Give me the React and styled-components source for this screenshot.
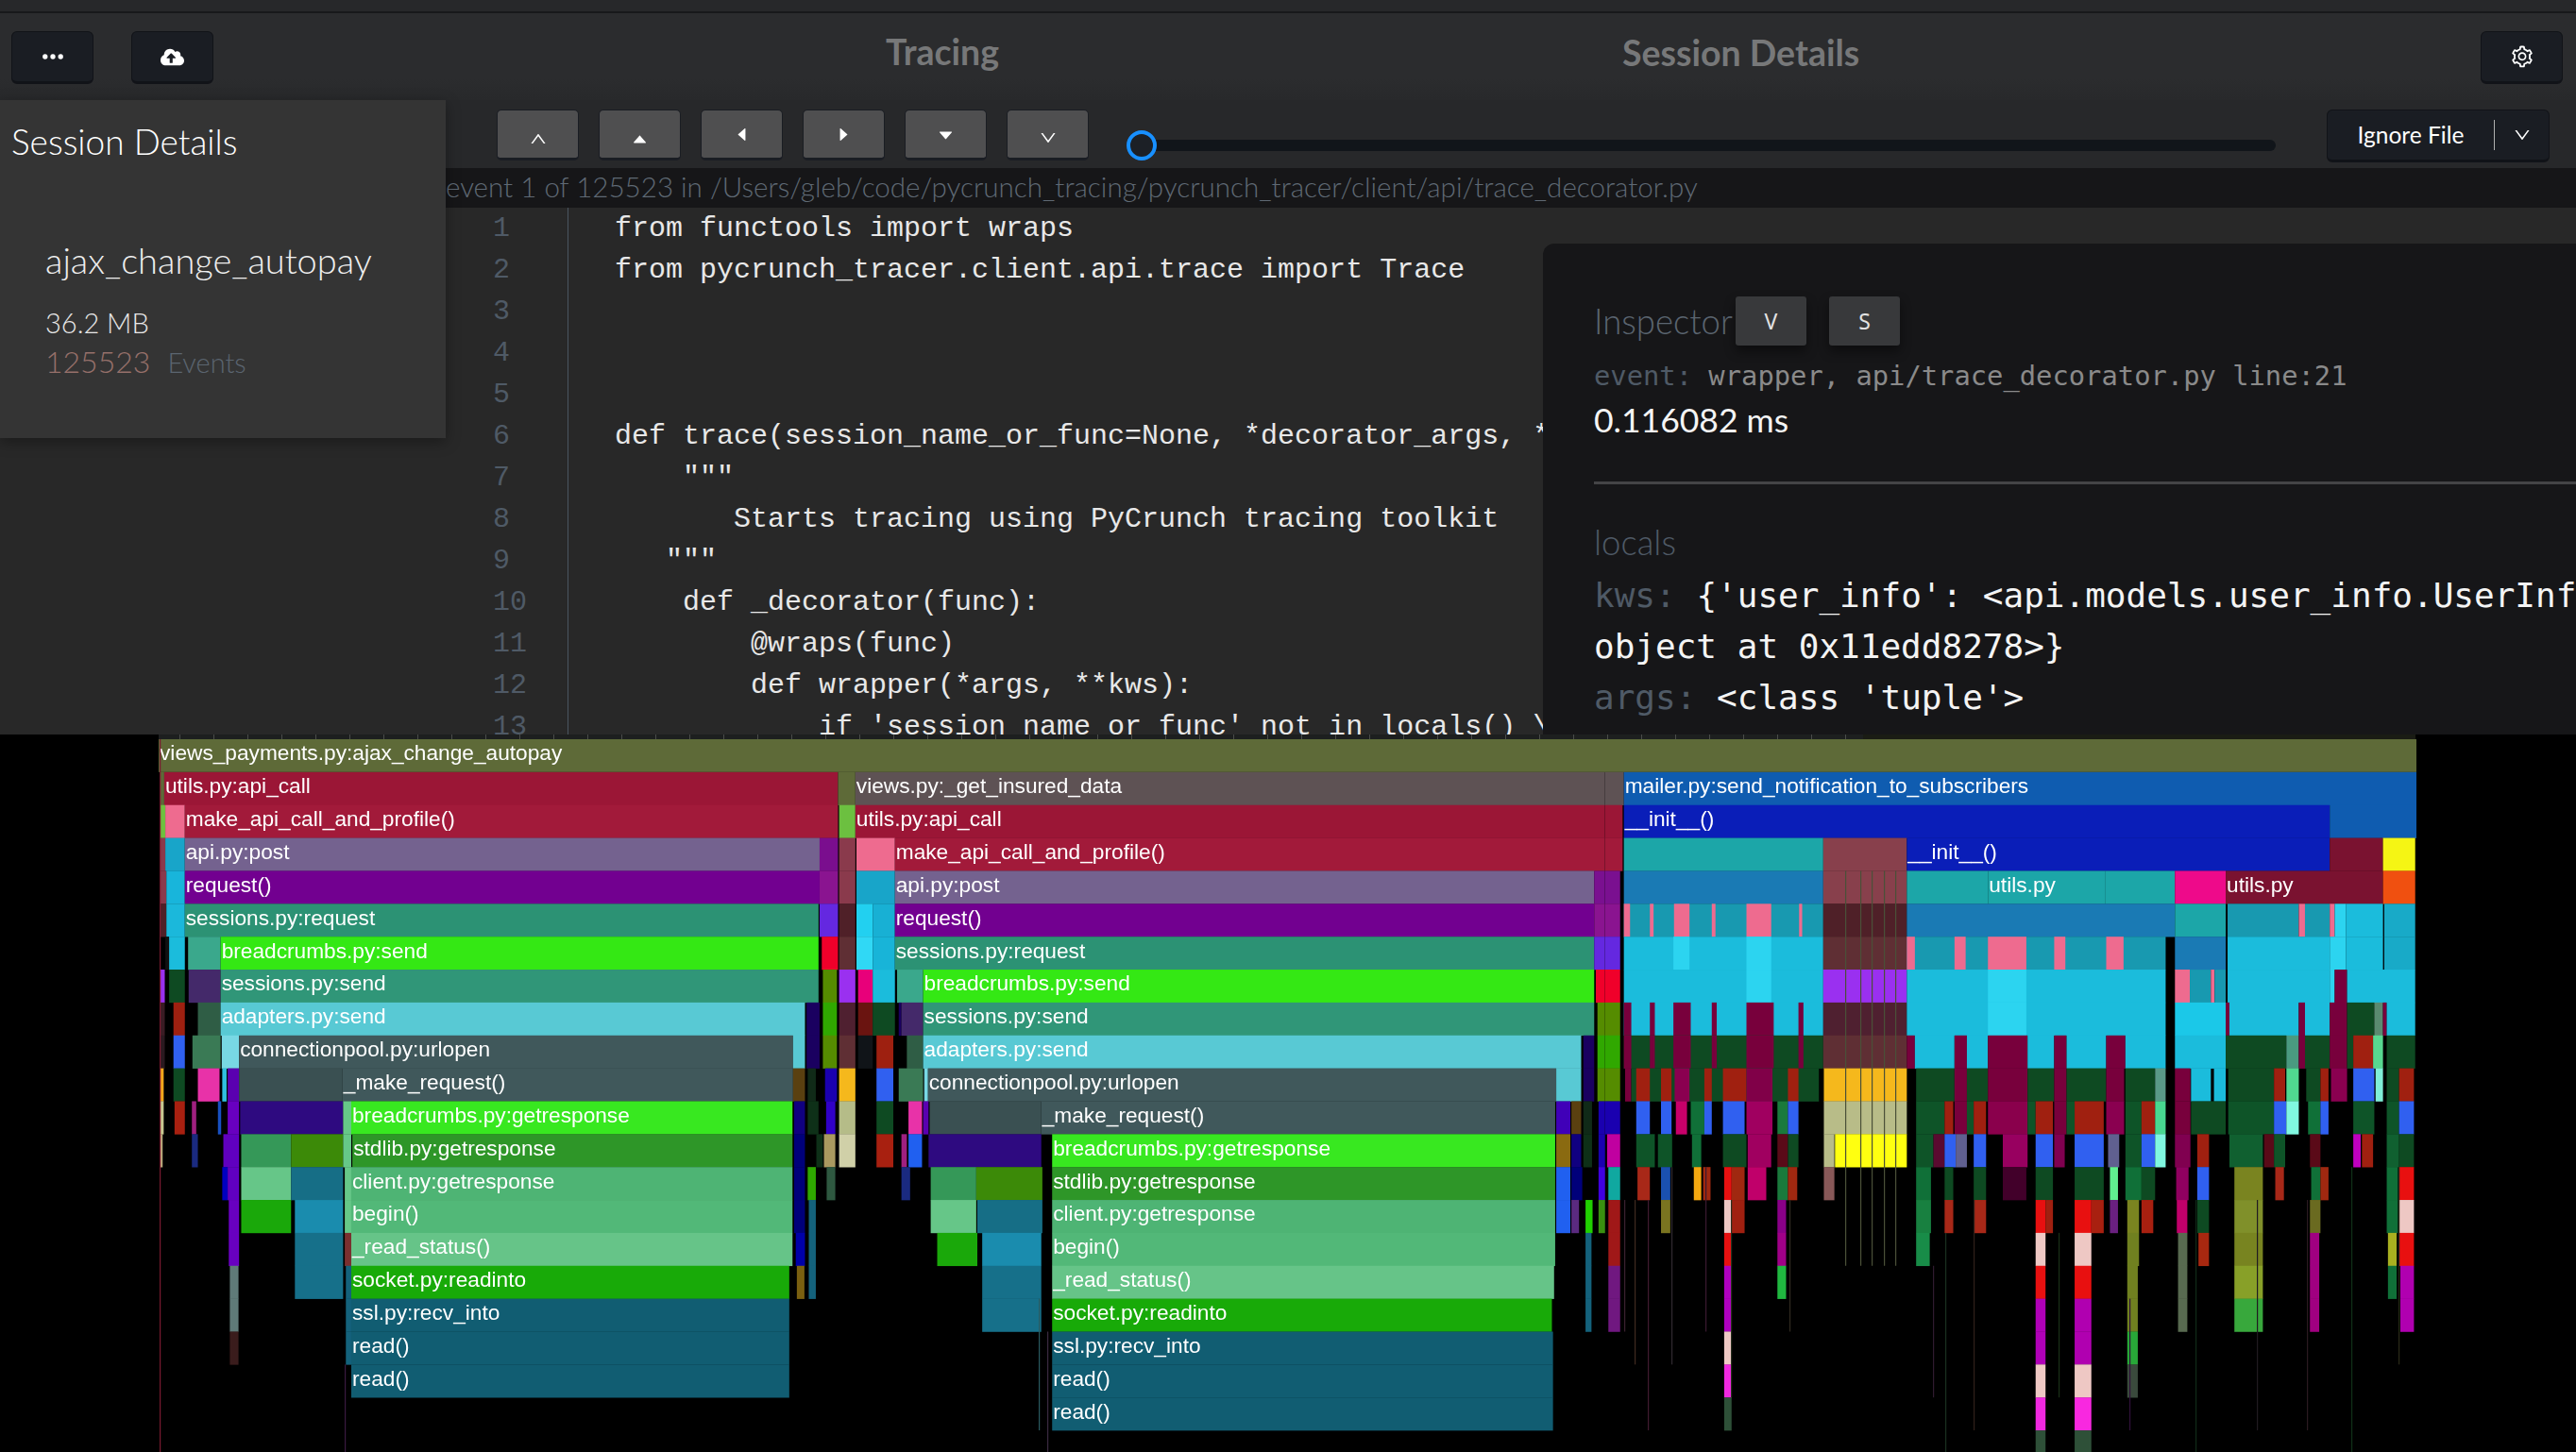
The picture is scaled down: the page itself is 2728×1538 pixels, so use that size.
import React from "react";
import styled, { createGlobalStyle } from "styled-components";
import {
  AiOutlineEllipsis,
  AiOutlineSetting,
  AiOutlineUp,
  AiOutlineDown,
  AiFillCaretUp,
  AiFillCaretDown,
  AiFillCaretLeft,
  AiFillCaretRight,
} from "react-icons/ai";
import { FaCloudUploadAlt } from "react-icons/fa";

const GlobalStyle = createGlobalStyle`
  html, body {
    margin: 0;
    padding: 0;
    background: #000;
  }
`;

const Page = styled.div`
  width: 2728px;
  height: 1538px;
  overflow: hidden;
  display: flex;
  flex-direction: column;
  font-family: "Lato", "Liberation Sans", sans-serif;
  background: #000;
`;

const Workspace = styled.div`
  position: relative;
  height: 778px;
  flex: none;
  overflow: hidden;
  display: flex;
  flex-direction: column;
  background: #282828;
`;

const TopStrip = styled.div`
  height: 12px;
  flex: none;
  background: #27282a;
  border-bottom: 2px solid #18191b;
`;

const Header = styled.header`
  height: 92px;
  flex: none;
  display: grid;
  grid-template-columns: 938px 780px 1fr;
  align-items: center;
  padding-right: 14px;
  background: linear-gradient(#2b2c2e 75%, #28292b);
`;

const HeaderLeft = styled.div`
  display: flex;
  gap: 40px;
  padding-left: 12px;
  margin-top: 2px;
`;

const HeaderTitle = styled.div`
  font-size: 37.5px;
  font-weight: 700;
  color: #777879;
  margin-top: -12px;
`;

const HeaderRight = styled.div`
  display: flex;
  justify-content: space-between;
  align-items: center;
  margin-top: 2px;
`;

const DarkButton = styled.button`
  width: 87px;
  height: 56px;
  display: flex;
  align-items: center;
  justify-content: center;
  padding: 0;
  color: #fff;
  background: #1a1d23;
  border: 1px solid #111318;
  border-bottom-width: 3px;
  border-radius: 6px;
`;

const Toolbar = styled.div`
  height: 72px;
  flex: none;
  display: flex;
  align-items: flex-start;
  padding: 10px 28px 0 526px;
  background: #27282a;
  box-sizing: border-box;
`;

const NavButtons = styled.div`
  display: flex;
  gap: 21px;
`;

const NavButton = styled.button`
  width: 87px;
  height: 54px;
  display: flex;
  align-items: center;
  justify-content: center;
  padding: ${(props) => props.$drop * 2}px 0 0;
  color: #fff;
  background: #4f4f50;
  border: 1px solid #1a1d23;
  border-bottom-width: 3px;
  border-radius: 5px;
`;

const Slider = styled.div`
  position: relative;
  width: 1217px;
  height: 12px;
  margin: 32px 54px 0 40px;
  border-radius: 6px;
  background: #11151a;
`;

const SliderKnob = styled.span`
  position: absolute;
  left: 0;
  top: -10px;
  width: 32px;
  height: 32px;
  box-sizing: border-box;
  border: 4px solid #1890ff;
  border-radius: 50%;
  background: #1c2026;
`;

const IgnoreButton = styled.button`
  width: 236px;
  height: 56px;
  display: flex;
  align-items: center;
  padding: 0;
  color: #fff;
  font-family: inherit;
  font-size: 24.5px;
  background: #1a1d23;
  border: 1px solid #111318;
  border-bottom-width: 3px;
  border-radius: 6px;
`;

const IgnoreLabel = styled.span`
  width: 176px;
  line-height: 32px;
  text-align: center;
  border-right: 1px solid #b0b0b0;
`;

const IgnoreCaret = styled.span`
  flex: 1;
  display: flex;
  justify-content: center;
`;

const PathBar = styled.div`
  height: 42px;
  flex: none;
  margin-left: 472px;
  line-height: 40px;
  font-size: 29.55px;
  font-weight: 300;
  color: #5f6974;
  background: #161618;
  white-space: nowrap;
`;

const CodeArea = styled.div`
  flex: 1;
  margin-left: 472px;
  display: flex;
  min-height: 0;
`;

const Gutter = styled.div`
  width: 79px;
  padding-left: 50px;
  flex: none;
  border-right: 1px solid #4a5560;
`;

const LineNumber = styled.div`
  height: 44px;
  line-height: 44px;
  font-family: "Liberation Mono", monospace;
  font-size: 30px;
  color: #4f5a66;
`;

const CodeBody = styled.div`
  padding-left: 49px;
`;

const CodeLine = styled.pre`
  height: 44px;
  margin: 0;
  line-height: 44px;
  font-family: "Liberation Mono", monospace;
  font-size: 30px;
  color: #e8e8e8;
`;

const SessionPanel = styled.aside`
  position: absolute;
  left: 0;
  top: 106px;
  width: 472px;
  height: 358px;
  box-sizing: border-box;
  padding: 0 12px;
  background: #343434;
  box-shadow: 0 4px 14px rgba(0, 0, 0, 0.35);
  color: #fff;
`;

const PanelTitle = styled.h2`
  margin: 0;
  padding-top: 22px;
  font-size: 37px;
  line-height: 44px;
  font-weight: 300;
`;

const PanelBody = styled.div`
  padding: 80px 0 0 36px;
`;

const SessionName = styled.div`
  font-size: 38px;
  line-height: 46px;
  font-weight: 300;
  color: #eee;
`;

const SessionSize = styled.div`
  margin-top: 26px;
  font-size: 29px;
  line-height: 36px;
  font-weight: 300;
  color: #e8e8e8;
`;

const SessionEvents = styled.div`
  display: flex;
  align-items: baseline;
  gap: 18px;
  margin-top: 3px;
`;

const EventCount = styled.span`
  font-size: 32px;
  font-weight: 300;
  color: #96706a;
`;

const EventsLabel = styled.span`
  font-size: 29px;
  font-weight: 300;
  color: #5b6570;
`;

const Inspector = styled.section`
  position: absolute;
  left: 1634px;
  right: 0;
  top: 258px;
  bottom: 0;
  overflow: hidden;
  box-sizing: border-box;
  padding: 56px 0 0 54px;
  background: #161618;
  border-top-left-radius: 12px;
`;

const InspectorHead = styled.div`
  display: flex;
  align-items: center;
  height: 52px;
`;

const InspectorTitle = styled.span`
  width: 150px;
  font-size: 36.5px;
  font-weight: 300;
  color: #5b6570;
`;

const KeyButton = styled.button`
  width: 75px;
  height: 52px;
  margin-right: 24px;
  padding: 0;
  color: #e2e2e2;
  font-family: "Noto Sans", sans-serif;
  font-size: 23px;
  background: #38393b;
  border: none;
  border-radius: 3px;
  box-shadow: 0 6px 12px rgba(0, 0, 0, 0.45);
`;

const EventLine = styled.div`
  margin-top: 10px;
  line-height: 44px;
  font-family: "DejaVu Sans Mono", monospace;
  font-size: 28.8px;
  color: #8a8a8a;
  white-space: pre;
`;

const Muted = styled.span`
  color: #4f5a66;
`;

const Duration = styled.div`
  margin-top: 0;
  line-height: 50px;
  font-size: 35.5px;
  font-weight: 400;
  color: #f4f4f4;
`;

const Divider = styled.hr`
  height: 3px;
  margin: 40px 0 0;
  border: none;
  background: #444446;
`;

const LocalsTitle = styled.div`
  margin: 39px 0 8px;
  line-height: 44px;
  font-size: 36.5px;
  font-weight: 300;
  color: #4f5a66;
`;

const LocalLine = styled.div`
  line-height: 54px;
  font-family: "DejaVu Sans Mono", monospace;
  font-size: 36px;
  color: #f4f4f4;
  white-space: pre;
`;

const FlameChart = styled.svg`
  display: block;
  flex: none;
  filter: blur(0.6px);
`;

const FlameLabel = styled.text`
  font-family: "Liberation Sans", Arial, sans-serif;
  font-size: 22.7px;
  fill: #ffffff;
`;

const codeLines = [
  "from functools import wraps",
  "from pycrunch_tracer.client.api.trace import Trace",
  "",
  "",
  "",
  "def trace(session_name_or_func=None, *decorator_args, **decorator_kwargs):",
  '    """',
  "       Starts tracing using PyCrunch tracing toolkit",
  '   """',
  "    def _decorator(func):",
  "        @wraps(func)",
  "        def wrapper(*args, **kws):",
  "            if 'session_name_or_func' not in locals() \\",
];

const olive = "#5e6a38";
const crimson = "#9b1636";
const crimson2 = "#a21a3a";
const pink = "#ee6b8f";
const cyan = "#1bbcdc";
const cyan2 = "#2cd4f0";
const cyan3 = "#18a5c9";
const teal = "#1899b0";
const maroon = "#78003c";
const forest = "#0e4a22";
const forest2 = "#0e5428";
const forest3 = "#107038";
const rust = "#a02010";
const blue = "#3060f0";
const purple = "#720090";
const mauve = "#74628f";
const sea = "#2c9274";
const lime = "#34e814";
const aqua = "#58c9d4";
const slate = "#40585b";
const slate2 = "#3a5052";
const deep = "#115d72";
const rosy = "#8a3a4c";
const wine = "#4f2028";
const wine2 = "#5f2f34";
const violet = "#9a30f0";
const amber = "#f5b81c";
const indigo = "#1a00b0";
const navy = "#00007a";
const mist = "#eec8c4";
const magenta = "#b000b0";
const red = "#e81010";

// segments are [from, to, colour, label] in crop pixels of each chart part
const leftRows = {
  1: [[295, 303, olive], [303, 1533, crimson, "utils.py:api_call"]],
  2: [[295, 305, "#6fbf3f"], [305, 341, pink], [341, 1533, crimson2, "make_api_call_and_profile()"]],
  3: [[295, 305, rosy], [305, 341, cyan3], [341, 1512, mauve, "api.py:post"], [1512, 1533, "#7a0e8e"]],
  4: [[295, 307, rosy], [307, 341, "#18b5db"], [341, 1512, purple, "request()"], [1512, 1533, "#8a1490"]],
  5: [[295, 307, wine], [307, 341, "#1bb8db"], [341, 1510, sea, "sessions.py:request"], [1512, 1533, "#6428e0"]],
  6: [[305, 312, "#111"], [312, 341, cyan], [347, 407, "#3aa88c"], [407, 1510, lime, "breadcrumbs.py:send"], [1516, 1533, "#f0002a"]],
  7: [[296, 304, violet], [312, 341, forest], [348, 407, "#44296a"], [407, 1510, "#309678", "sessions.py:send"], [1518, 1533, "#558c00"]],
  8: [[296, 304, "#3a1c24"], [320, 341, "#9e2010"], [365, 407, "#2f5d45"], [407, 1485, aqua, "adapters.py:send"], [1488, 1512, "#1a0060"], [1518, 1533, "#30a800"]],
  9: [[296, 304, "#2a1a20"], [320, 341, blue], [355, 407, "#3a7a55"], [409, 441, "#78d8e4"], [441, 1463, slate, "connectionpool.py:urlopen"], [1463, 1485, aqua], [1488, 1512, "#1a0060"], [1518, 1533, "#558c00"]],
  10: [[296, 302, "#f5a81c"], [320, 341, forest], [365, 405, "#e832a8"], [410, 418, "#30c0e0"], [420, 441, "#5a00b0"], [441, 632, slate2], [632, 1463, slate, "_make_request()"], [1463, 1485, "#5a4010"], [1490, 1505, "#102a18"], [1522, 1533, indigo]],
  11: [[296, 302, "#c8c890"], [322, 341, "#a82010"], [354, 362, "#a02080"], [402, 408, "#1850c0"], [420, 441, "#6800c0"], [443, 633, "#2e0a80"], [633, 648, "#66c888"], [648, 1462, "#38e820", "breadcrumbs.py:getresponse"], [1465, 1485, "#100080"], [1490, 1510, "#0e3018"], [1524, 1533, "#3000c8"]],
  12: [[296, 300, "#c0b080"], [354, 365, "#1a2a80"], [412, 441, "#6000c0"], [445, 537, "#359858"], [537, 633, "#3c8a08"], [633, 648, "#66c888"], [650, 1462, "#2e9628", "stdlib.py:getresponse"], [1465, 1485, navy], [1506, 1518, "#0e3018"], [1520, 1533, "#aa9a60"]],
  13: [[410, 420, "#0000c0"], [420, 441, "#6000c0"], [445, 537, "#66c688"], [537, 633, "#166e86"], [636, 648, "#66c888"], [648, 1462, "#4eb474", "client.py:getresponse"], [1465, 1485, navy], [1490, 1505, "#2fa800"], [1525, 1533, "#2e5840"]],
  14: [[422, 441, "#6800c0"], [445, 537, "#1aa80a"], [544, 633, "#1a8cae"], [636, 648, "#66c888"], [648, 1462, "#52b878", "begin()"], [1465, 1485, navy], [1492, 1505, "#14627c"]],
  15: [[422, 441, "#6800c0"], [544, 633, "#16708a"], [636, 648, "#7a3030"], [648, 1462, "#66c488", "_read_status()"], [1468, 1485, "#0000a8"], [1492, 1505, "#14627c"]],
  16: [[424, 440, "#5f7a78"], [544, 633, "#16708a"], [638, 648, "#14627c"], [648, 1456, "#18aa08", "socket.py:readinto"], [1470, 1484, "#7a6010"], [1492, 1505, "#14627c"]],
  17: [[424, 440, "#5f7a78"], [638, 648, "#14627c"], [648, 1456, deep, "ssl.py:recv_into"]],
  18: [[424, 440, "#3a1c1c"], [638, 648, "#14627c"], [648, 1456, deep, "read()"]],
  19: [[648, 1456, deep, "read()"]],
};

const middleRows = {
  1: [[0, 13, crimson], [13, 45, olive], [45, 1428, "#5e5254", "views.py:_get_insured_data"]],
  2: [[0, 13, crimson2], [15, 45, "#6cc040"], [45, 1428, crimson, "utils.py:api_call"]],
  3: [[0, 13, "#7a0e8e"], [15, 45, rosy], [47, 118, pink], [118, 1428, crimson2, "make_api_call_and_profile()"]],
  4: [[0, 13, "#8a1490"], [15, 45, rosy], [47, 118, cyan3], [118, 1408, mauve, "api.py:post"], [1408, 1428, "#7a1090"]],
  5: [[0, 13, "#6428e0"], [15, 45, wine], [47, 77, "#22d0f0"], [77, 118, "#18b0d4"], [118, 1408, purple, "request()"], [1408, 1428, "#8a1490"]],
  6: [[0, 13, "#f0002a"], [15, 45, wine2], [47, 77, "#30d8f5"], [77, 118, "#18b4d8"], [118, 1408, sea, "sessions.py:request"], [1408, 1428, "#6428e0"]],
  7: [[0, 11, "#558c00"], [15, 45, violet], [50, 77, "#e8007a"], [77, 118, cyan], [122, 170, "#3aa88c"], [170, 1408, lime, "breadcrumbs.py:send"], [1411, 1428, "#f0002a"]],
  8: [[0, 11, "#30a800"], [15, 45, "#4f2030"], [50, 77, "#6a1410"], [77, 118, forest], [125, 130, "#1a0060"], [130, 170, "#44296a"], [170, 1408, "#309678", "sessions.py:send"], [1414, 1428, "#558c00"]],
  9: [[0, 11, "#558c00"], [15, 45, wine2], [50, 77, "#101418"], [84, 115, "#9e2010"], [140, 170, "#2f5d45"], [170, 1384, aqua, "adapters.py:send"], [1388, 1408, "#1a0060"], [1414, 1428, "#30a800"]],
  10: [[0, 11, indigo], [15, 45, amber], [84, 115, blue], [125, 170, "#3a7a55"], [172, 179, "#78d8e4"], [179, 1338, slate, "connectionpool.py:urlopen"], [1338, 1384, aqua], [1388, 1408, "#1a0060"], [1414, 1428, "#558c00"]],
  11: [[0, 8, "#3000c8"], [15, 45, "#b5bc88"], [84, 115, forest], [143, 168, "#e832a8"], [170, 180, "#5a00b0"], [182, 388, slate2], [388, 1336, slate, "_make_request()"], [1338, 1364, "#4000b8"], [1366, 1384, "#5a4010"], [1388, 1404, "#102a18"], [1416, 1428, indigo]],
  12: [[0, 8, "#aa9a60"], [15, 45, "#d0d0a8"], [84, 115, "#a82010"], [130, 140, "#a02080"], [143, 168, "#2060f0"], [180, 388, "#2e0a80"], [408, 1336, "#38e820", "breadcrumbs.py:getresponse"], [1338, 1364, "#8a6a10"], [1366, 1384, "#100080"], [1388, 1404, "#0e3018"], [1416, 1428, indigo]],
  13: [[0, 8, "#2e5840"], [130, 146, "#1a2a80"], [184, 268, "#359858"], [268, 390, "#3c8a08"], [408, 1336, "#2e9628", "stdlib.py:getresponse"], [1338, 1364, "#2060f0"], [1366, 1386, navy], [1416, 1428, "#4000e0"]],
  14: [[184, 268, "#66c688"], [270, 390, "#166e86"], [408, 1336, "#4eb474", "client.py:getresponse"], [1338, 1364, "#2060f0"], [1366, 1380, "#5a2a80"], [1392, 1405, "#20d000"], [1416, 1428, "#3a9010"]],
  15: [[196, 270, "#1aa80a"], [279, 388, "#1a8cae"], [408, 1336, "#52b878", "begin()"], [1392, 1403, "#14627c"]],
  16: [[279, 388, "#16708a"], [408, 1334, "#66c488", "_read_status()"], [1392, 1403, "#14627c"]],
  17: [[279, 388, "#16708a"], [408, 1330, "#18aa08", "socket.py:readinto"], [1392, 1403, "#14627c"]],
  18: [[408, 1332, deep, "ssl.py:recv_into"]],
  19: [[408, 1332, deep, "read()"]],
  20: [[408, 1332, deep, "read()"]],
};

const rightRows = {
  1: [[0, 30, "#5e5254"], [30, 1310, "#0f5cb0", "mailer.py:send_notification_to_subscribers"]],
  2: [[0, 28, crimson], [30, 1170, "#0a1eb8", "__init__()"], [1170, 1310, "#0f5cb0"]],
  3: [[0, 28, crimson2], [30, 352, "#1ca6a8"], [352, 487, "#88404c"], [487, 1170, "#0a1eb8", "__init__()"], [1170, 1256, "#7a1230"], [1256, 1308, "#f5f514"]],
  4: [[0, 24, "#7a1090"], [30, 352, "#1a7ab4"], [352, 487, "#88404c"], [487, 618, "#1ca6a8"], [618, 808, "#1ca6a8", "utils.py"], [808, 920, "#1ca6a8"], [920, 1002, "#ee0a8a"], [1002, 1256, "#7a1230", "utils.py"], [1256, 1308, "#f05010"]],
  5: [[0, 24, "#8a1490"], [30, 352, teal], [30, 40, pink], [72, 78, pink], [111, 136, pink], [172, 178, pink], [228, 268, pink], [313, 318, pink], [352, 487, wine], [487, 920, "#1a7ab4"], [920, 1002, "#1ca6a8"], [1005, 1120, teal], [1120, 1130, pink], [1130, 1170, teal], [1170, 1178, pink], [1178, 1196, cyan2], [1196, 1256, cyan], [1258, 1308, "#18aac8"]],
  6: [[0, 24, "#6428e0"], [30, 352, cyan], [110, 136, cyan2], [228, 268, cyan2], [352, 487, wine2], [487, 905, teal], [487, 500, pink], [564, 582, pink], [618, 680, pink], [725, 743, pink], [809, 837, pink], [920, 1002, "#1a7ab4"], [1005, 1170, cyan], [1170, 1196, cyan2], [1196, 1256, cyan], [1258, 1308, "#18aac8"]],
  7: [[0, 24, "#f0002a"], [30, 352, cyan], [228, 268, cyan2], [352, 487, violet], [487, 905, cyan], [618, 680, cyan2], [920, 944, pink], [944, 978, teal], [978, 984, pink], [984, 1002, teal], [1005, 1170, cyan], [1170, 1178, cyan2], [1178, 1198, maroon], [1198, 1308, cyan]],
  8: [[0, 24, "#558c00"], [30, 352, cyan], [30, 42, maroon], [72, 80, maroon], [110, 138, maroon], [172, 180, maroon], [228, 272, maroon], [312, 320, maroon], [352, 487, "#4f2030"], [487, 905, cyan], [618, 680, cyan2], [920, 1002, "#1bc8e8"], [1002, 1008, maroon], [1008, 1120, cyan], [1120, 1130, maroon], [1130, 1170, cyan], [1170, 1198, maroon], [1198, 1242, forest], [1242, 1256, "#5a8a70"], [1256, 1262, maroon], [1262, 1308, cyan]],
  9: [[0, 24, "#30a800"], [30, 352, forest], [30, 42, maroon], [72, 80, maroon], [110, 138, maroon], [172, 180, maroon], [228, 272, maroon], [312, 320, maroon], [352, 487, wine2], [487, 500, maroon], [500, 564, cyan], [564, 584, maroon], [584, 618, cyan], [618, 682, maroon], [682, 725, cyan], [725, 745, maroon], [745, 809, cyan], [809, 840, maroon], [840, 905, cyan], [920, 1002, cyan], [1002, 1100, forest], [1100, 1120, "#4a9a80"], [1120, 1130, maroon], [1130, 1170, forest], [1170, 1198, maroon], [1198, 1208, forest], [1208, 1240, rust], [1240, 1256, "#58d890"], [1262, 1308, forest]],
  10: [[0, 24, "#558c00"], [32, 42, maroon], [42, 345, forest], [50, 72, rust], [90, 107, rust], [112, 136, "#8a0050"], [160, 172, rust], [190, 228, rust], [228, 270, "#800048"], [295, 312, rust], [353, 487, amber], [502, 564, forest], [564, 584, maroon], [584, 618, forest], [618, 682, maroon], [682, 725, forest], [725, 745, maroon], [745, 809, forest], [809, 838, maroon], [840, 888, forest], [888, 905, "#5a9a88"], [920, 945, maroon], [946, 978, cyan], [983, 1002, cyan], [1006, 1080, forest], [1080, 1098, rust], [1100, 1120, "#50d890"], [1132, 1155, forest], [1155, 1168, rust], [1172, 1198, "#8a0050"], [1208, 1242, blue], [1244, 1256, "#80f0d8"], [1262, 1282, forest], [1282, 1306, rust]],
  11: [[0, 24, indigo], [50, 72, blue], [90, 107, blue], [114, 132, "#c8006a"], [138, 160, forest3], [160, 172, blue], [190, 225, blue], [228, 270, "#a00060"], [278, 295, "#1a7a3c"], [295, 312, blue], [353, 487, "#b8bc88"], [502, 548, forest2], [548, 562, rust], [564, 584, maroon], [584, 595, forest2], [595, 615, rust], [618, 682, "#8a004c"], [682, 695, forest2], [695, 723, rust], [725, 745, maroon], [745, 758, forest2], [758, 805, rust], [809, 838, "#8a0050"], [840, 866, forest2], [866, 888, rust], [888, 905, "#48d890"], [920, 945, maroon], [946, 1002, forest], [1006, 1080, forest2], [1080, 1100, blue], [1100, 1120, "#80f8e0"], [1135, 1155, forest3], [1155, 1168, blue], [1208, 1242, forest2], [1262, 1282, forest2], [1282, 1306, blue]],
  12: [[3, 24, "#c000a0"], [50, 80, forest2], [85, 108, forest2], [140, 155, forest3], [190, 228, forest], [230, 268, "#a00060"], [278, 295, "#5a0a18"], [295, 312, forest], [353, 370, "#b8bc88"], [371, 487, "#ffff10"], [502, 530, forest2], [530, 548, "#5a0a30"], [548, 566, blue], [566, 584, "#606090"], [595, 615, blue], [642, 682, "#980060"], [695, 723, blue], [725, 742, "#800050"], [758, 805, blue], [812, 830, "#606090"], [840, 866, forest2], [866, 888, blue], [888, 905, "#80f8e0"], [920, 945, "#800050"], [956, 975, rust], [1008, 1062, "#106030"], [1064, 1080, "#5a0a18"], [1080, 1098, forest2], [1138, 1155, "#5a0a18"], [1208, 1220, "#c000c0"], [1222, 1240, rust], [1262, 1282, "#106030"], [1282, 1306, forest]],
  13: [[5, 24, "#10a8a0"], [52, 72, "#a82818"], [90, 105, "#1a50b0"], [143, 155, "#f5a810"], [158, 170, "#a02810"], [192, 204, red], [204, 225, "#a02810"], [230, 260, "#c0006a"], [278, 295, "#1a7a3c"], [295, 310, "#a02810"], [353, 370, "#885858"], [502, 526, forest3], [548, 562, forest], [595, 615, forest], [642, 680, "#42002a"], [695, 723, forest], [758, 805, forest], [815, 828, "#60f090"], [840, 866, forest3], [866, 888, forest], [922, 942, "#900060"], [956, 975, blue], [1016, 1062, "#7a8420"], [1082, 1096, "#a82818"], [1140, 1155, forest3], [1155, 1168, "#a02810"], [1262, 1280, forest3], [1282, 1306, red]],
  14: [[5, 24, "#a01818"], [90, 105, "#7a7420"], [192, 204, mist], [204, 225, rust], [278, 292, "#8a0088"], [502, 526, "#188040"], [548, 562, "#a82818"], [595, 615, "#a82818"], [695, 711, red], [711, 723, rust], [758, 785, red], [785, 805, "#a82010"], [815, 828, "#6a2080"], [843, 862, "#7a8420"], [866, 885, "#a82010"], [923, 940, "#c0006a"], [956, 975, forest], [1016, 1062, "#80902a"], [1138, 1155, "#6a6a20"], [1262, 1280, forest3], [1282, 1306, mist]],
  15: [[5, 24, "#a01818"], [192, 204, red], [278, 292, "#a00088"], [502, 524, "#188c48"], [695, 711, mist], [758, 785, mist], [843, 862, "#708020"], [925, 940, "#586a50"], [958, 975, "#a82810"], [1016, 1062, "#788420"], [1138, 1153, "#a00080"], [1264, 1278, "#a8b020"], [1282, 1306, red]],
  16: [[5, 24, "#701880"], [192, 204, "#b000c0"], [278, 292, "#20b840"], [695, 711, red], [758, 785, red], [843, 860, "#708020"], [925, 940, "#586a50"], [1016, 1062, "#88a028"], [1138, 1153, "#a00080"], [1264, 1278, forest3], [1284, 1306, magenta]],
  17: [[5, 24, "#701880"], [192, 204, "#b000c0"], [695, 711, "#b000b8"], [758, 785, magenta], [843, 860, "#708020"], [925, 940, "#586a50"], [1016, 1062, "#38a83c"], [1138, 1153, "#a00080"], [1284, 1306, magenta]],
  18: [[192, 204, mist], [695, 711, "#b000b8"], [758, 785, magenta], [843, 860, "#28a838"]],
  19: [[192, 204, "#f028e0"], [695, 711, mist], [758, 785, mist], [843, 860, "#3a4a3c"]],
  20: [[192, 204, "#2e5038"], [695, 711, "#f028e0"], [758, 785, "#f828e0"]],
  21: [[695, 711, "#2e5038"], [758, 785, "#2e5038"]],
};

// hairlines: [x in full pixels, first row, last row, colour]
const hairlines = [
  [169, 0, 21, "#7a1a30"],
  [365, 19, 21, "#3a1a40"],
  [1109, 18, 21, "#3a2a40"],
  [1100, 17, 20, "#2a5a60"],
  [1954, 4, 15, "#4a5038"],
  [1970, 4, 15, "#4a5038"],
  [1982, 4, 15, "#4a5038"],
  [1995, 4, 15, "#4a5038"],
  [2007, 4, 15, "#4a5038"],
  [1720, 14, 17, "#3a2030"],
  [1731, 14, 18, "#402a20"],
  [1745, 14, 20, "#401a30"],
  [1770, 13, 18, "#302a30"],
  [1806, 13, 17, "#3a1a30"],
  [1833, 14, 19, "#2a3020"],
  [1895, 14, 17, "#302a20"],
  [2047, 16, 19, "#301a30"],
  [2060, 15, 21, "#1a3020"],
  [2090, 14, 20, "#30201a"],
  [2180, 15, 19, "#1a3018"],
  [2255, 17, 20, "#30103a"],
  [2325, 14, 21, "#102a18"],
  [2390, 14, 20, "#201a20"],
  [2443, 14, 20, "#2a1a20"],
  [2490, 13, 21, "#103018"],
  [2540, 13, 18, "#2a2a18"],
];

const ROW_HEIGHT = 34.86;
const CHART_HEIGHT = 760;
const LABEL_LIFT = 3;
const rowTop = (row) => 5 + ROW_HEIGHT * row;

const toBars = (rows, origin, scale) =>
  Object.entries(rows).flatMap(([row, segments]) =>
    segments.map(([from, to, color, label]) => ({
      row: Number(row),
      x: origin + from / scale,
      width: (to - from) / scale,
      color,
      label,
    }))
  );

const bars = [
  ...toBars(leftRows, 0, 1.742),
  ...toBars(middleRows, 880, 1.742),
  ...toBars(rightRows, 1700, 1.525),
];

const Flame = () => {
  return (
    <FlameChart width="2728" height={CHART_HEIGHT} viewBox={`0 0 2728 ${CHART_HEIGHT}`}>
      <defs>
        <pattern id="ticks" width="36" height="5" patternUnits="userSpaceOnUse">
          <rect width="36" height="5" fill="#1d1f1f" />
          <rect x="10" width="1" height="5" fill="#4a4c4a" />
        </pattern>
      </defs>
      <rect x="168" width="1805" height="5" fill="url(#ticks)" />
      <rect x="1973" width="585" height="5" fill="#1a1c14" />
      <rect x="168" y="5" width="2391" height={ROW_HEIGHT} fill={olive} />
      <FlameLabel x="169" y={5 + ROW_HEIGHT / 2 - LABEL_LIFT} dominantBaseline="central">
        views_payments.py:ajax_change_autopay
      </FlameLabel>
      {bars.map((bar, i) => (
        <rect
          key={i}
          x={bar.x}
          y={rowTop(bar.row)}
          width={bar.width}
          height={ROW_HEIGHT + 0.3}
          fill={bar.color}
        />
      ))}
      {hairlines.map(([x, from, to, color], i) => (
        <rect
          key={i}
          x={x}
          y={rowTop(from)}
          width="1.2"
          height={(to - from + 1) * ROW_HEIGHT}
          fill={color}
        />
      ))}
      {bars
        .filter((bar) => bar.label)
        .map((bar, i) => (
          <FlameLabel
            key={i}
            x={bar.x + 1}
            y={rowTop(bar.row) + ROW_HEIGHT / 2 - LABEL_LIFT}
            dominantBaseline="central"
          >
            {bar.label}
          </FlameLabel>
        ))}
    </FlameChart>
  );
};

const App = () => {
  return (
    <Page>
      <GlobalStyle />
      <Workspace>
        <TopStrip />
        <Header>
          <HeaderLeft>
            <DarkButton>
              <AiOutlineEllipsis size={30} stroke="currentColor" strokeWidth={70} />
            </DarkButton>
            <DarkButton>
              <FaCloudUploadAlt size={25} />
            </DarkButton>
          </HeaderLeft>
          <HeaderTitle>Tracing</HeaderTitle>
          <HeaderRight>
            <HeaderTitle>Session Details</HeaderTitle>
            <DarkButton>
              <AiOutlineSetting size={26} />
            </DarkButton>
          </HeaderRight>
        </Header>
        <Toolbar>
          <NavButtons>
            <NavButton $drop={5}>
              <AiOutlineUp size={20} />
            </NavButton>
            <NavButton $drop={5}>
              <AiFillCaretUp size={19} />
            </NavButton>
            <NavButton $drop={0}>
              <AiFillCaretLeft size={19} />
            </NavButton>
            <NavButton $drop={0}>
              <AiFillCaretRight size={19} />
            </NavButton>
            <NavButton $drop={1}>
              <AiFillCaretDown size={19} />
            </NavButton>
            <NavButton $drop={4}>
              <AiOutlineDown size={20} />
            </NavButton>
          </NavButtons>
          <Slider>
            <SliderKnob />
          </Slider>
          <IgnoreButton>
            <IgnoreLabel>Ignore File</IgnoreLabel>
            <IgnoreCaret>
              <AiOutlineDown size={20} />
            </IgnoreCaret>
          </IgnoreButton>
        </Toolbar>
        <PathBar>
          event 1 of 125523 in /Users/gleb/code/pycrunch_tracing/pycrunch_tracer/client/api/trace_decorator.py
        </PathBar>
        <CodeArea>
          <Gutter>
            {codeLines.map((_, i) => (
              <LineNumber key={i}>{i + 1}</LineNumber>
            ))}
          </Gutter>
          <CodeBody>
            {codeLines.map((line, i) => (
              <CodeLine key={i}>{line}</CodeLine>
            ))}
          </CodeBody>
        </CodeArea>
        <SessionPanel>
          <PanelTitle>Session Details</PanelTitle>
          <PanelBody>
            <SessionName>ajax_change_autopay</SessionName>
            <SessionSize>36.2 MB</SessionSize>
            <SessionEvents>
              <EventCount>125523</EventCount>
              <EventsLabel>Events</EventsLabel>
            </SessionEvents>
          </PanelBody>
        </SessionPanel>
        <Inspector>
          <InspectorHead>
            <InspectorTitle>Inspector</InspectorTitle>
            <KeyButton>V</KeyButton>
            <KeyButton>S</KeyButton>
          </InspectorHead>
          <EventLine>
            <Muted>event:</Muted> wrapper, api/trace_decorator.py line:21
          </EventLine>
          <Duration>0.116082 ms</Duration>
          <Divider />
          <LocalsTitle>locals</LocalsTitle>
          <LocalLine>
            <Muted>kws:</Muted> {"{'user_info': <api.models.user_info.UserInfo"}
          </LocalLine>
          <LocalLine>{"object at 0x11edd8278>}"}</LocalLine>
          <LocalLine>
            <Muted>args:</Muted> {"<class 'tuple'>"}
          </LocalLine>
        </Inspector>
      </Workspace>
      <Flame />
    </Page>
  );
};

export default App;
